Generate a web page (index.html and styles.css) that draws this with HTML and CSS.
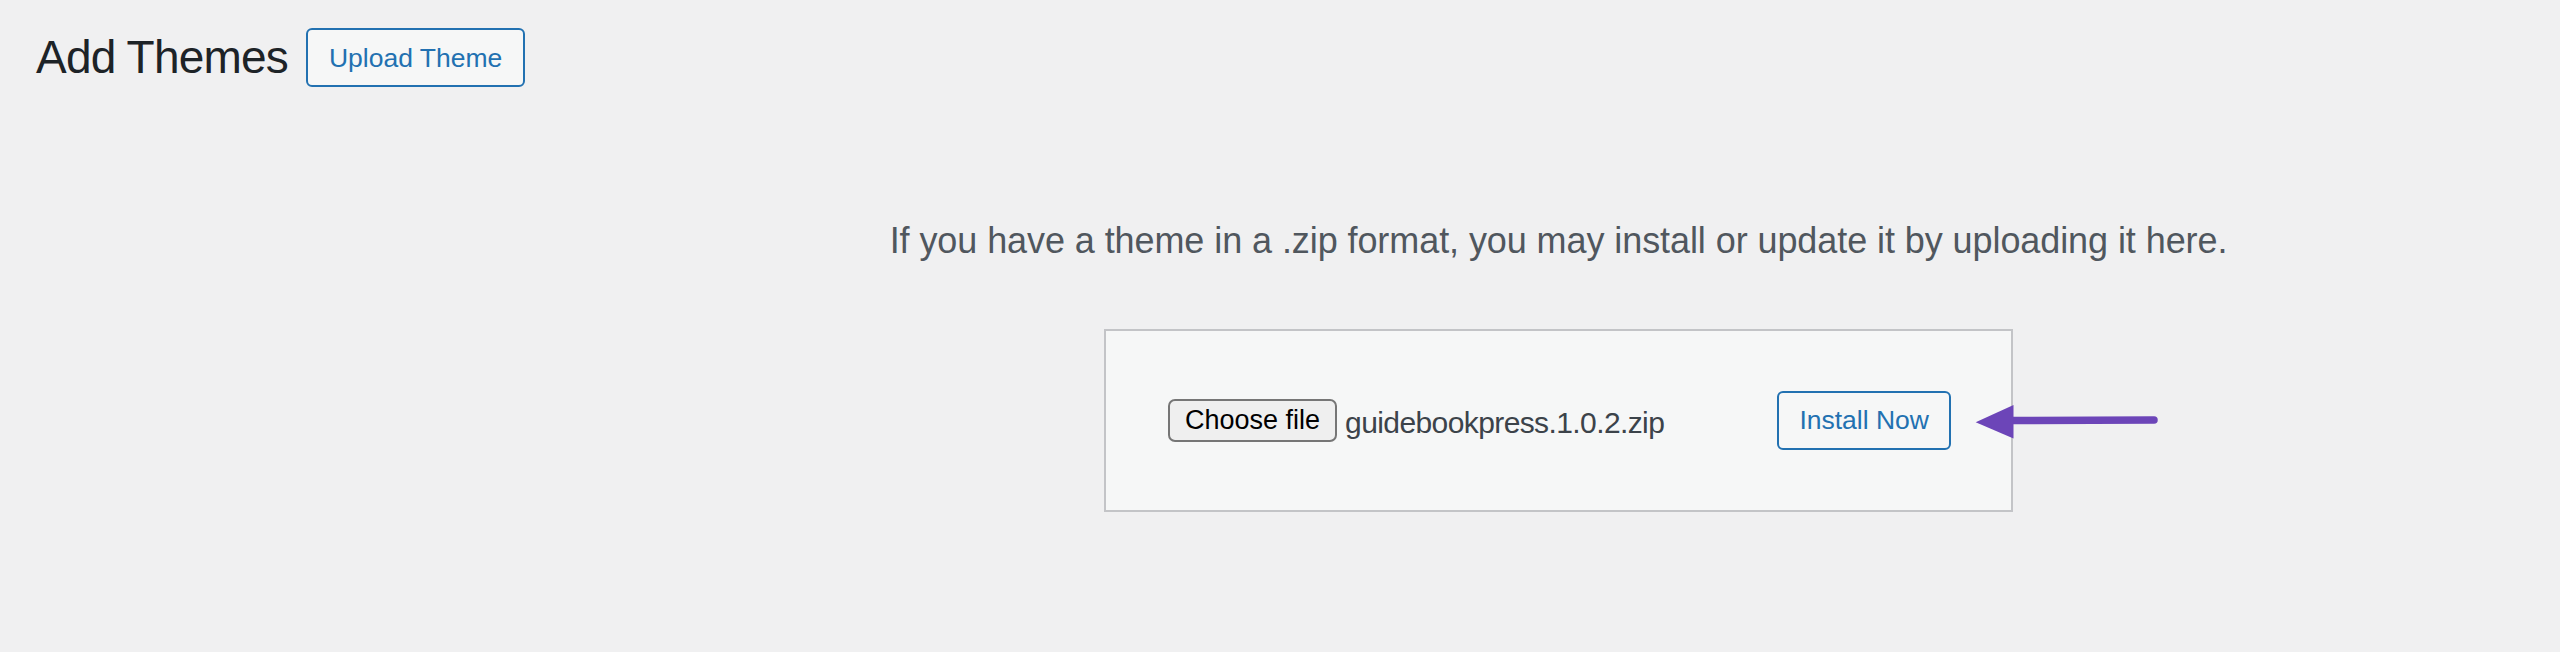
FILE: index.html
```html
<!DOCTYPE html>
<html lang="en">
<head>
<meta charset="utf-8">
<title>Add Themes</title>
<link rel="stylesheet" href="styles.css">
</head>
<body>
<div class="wrap">
  <div class="header">
    <h1 class="title">Add Themes</h1>
    <a class="title-action" href="#">Upload Theme</a>
  </div>
  <div class="upload">
    <p class="help">If you have a theme in a .zip format, you may install or update it by uploading it here.</p>
    <div class="form">
      <div class="file">
        <span class="choose">Choose file</span>
        <span class="filename">guidebookpress.1.0.2.zip</span>
      </div>
      <span class="install">Install Now</span>
      <svg class="arrow" width="190" height="45" viewBox="0 0 190 45" aria-hidden="true">
        <line x1="40" y1="20.6" x2="184" y2="20" stroke="#6c45b8" stroke-width="7.5" stroke-linecap="round"/>
        <polygon points="5.7,22.3 43.5,5 43.5,38.5" fill="#6c45b8"/>
      </svg>
    </div>
  </div>
</div>
</body>
</html>
```
FILE: styles.css
```css
html, body {
  margin: 0;
  background: #f0f0f1;
  font-family: "Liberation Sans", Arial, sans-serif;
}

.header {
  display: flex;
  align-items: center;
  padding: 28px 0 0 36px;
}

.title {
  margin: 0;
  font-size: 46px;
  font-weight: 400;
  line-height: 59px;
  letter-spacing: -0.8px;
  color: #1d2327;
}

.title-action {
  margin-left: 18px;
  box-sizing: border-box;
  height: 59px;
  padding: 0 21px;
  border: 2px solid #2271b1;
  border-radius: 6px;
  background: #f6f7f7;
  color: #2271b1;
  font-size: 26.5px;
  line-height: 57px;
  text-decoration: none;
  white-space: nowrap;
}

.upload {
  margin-left: 557px;
  text-align: center;
}

.help {
  margin: 0;
  padding-top: 134px;
  font-size: 36px;
  line-height: 40px;
  letter-spacing: -0.08px;
  color: #50575e;
}

.form {
  position: relative;
  display: flex;
  align-items: center;
  justify-content: space-between;
  box-sizing: border-box;
  width: 909px;
  height: 183px;
  margin: 68px auto 0;
  padding: 0 60px 0 62px;
  border: 2px solid #c3c4c7;
  background: #f6f7f7;
}

.file {
  display: flex;
  align-items: center;
}

.choose {
  box-sizing: border-box;
  height: 43px;
  padding: 0 15px;
  border: 2px solid #767676;
  border-radius: 7px;
  background: #efefef;
  color: #000;
  font-size: 27px;
  line-height: 39px;
  white-space: nowrap;
}

.filename {
  margin: 4px 0 0 8px;
  font-size: 30px;
  letter-spacing: -0.6px;
  color: #3c434a;
  white-space: nowrap;
}

.install {
  box-sizing: border-box;
  height: 59px;
  padding: 0 20px;
  border: 2px solid #2271b1;
  border-radius: 6px;
  background: #f6f7f7;
  color: #2271b1;
  font-size: 26.5px;
  line-height: 55px;
  white-space: nowrap;
}

.arrow {
  position: absolute;
  left: 864px;
  top: 69px;
}
```
